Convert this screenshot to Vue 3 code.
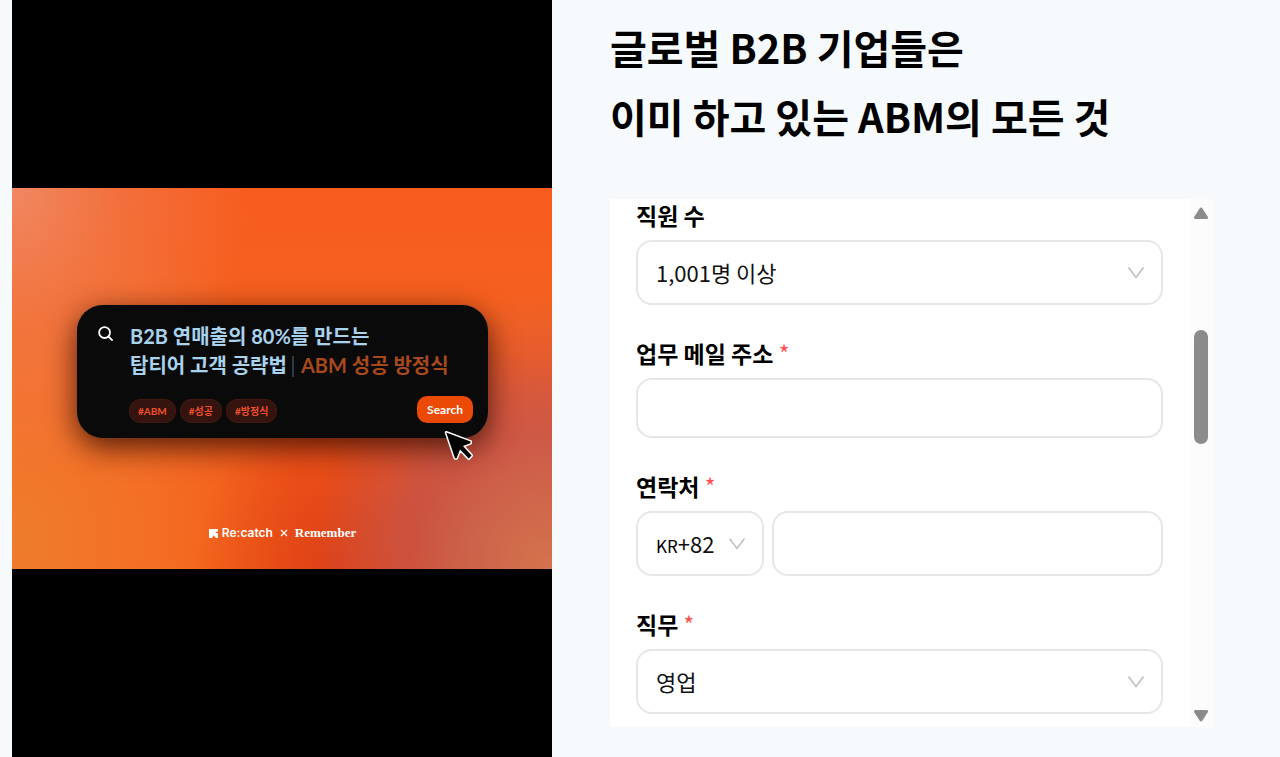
<script setup>
import { ref } from 'vue'

const tags = ['#ABM', '#성공', '#방정식']
const employees = ref('1,001명 이상')
const email = ref('')
const country = ref('+82')
const phone = ref('')
const job = ref('영업')
</script>

<template>
  <main class="page">
    <section class="media">
      <div class="banner">
        <div class="search-card">
          <div class="query">
            <svg class="lens" viewBox="0 0 16 16" aria-hidden="true">
              <circle cx="7" cy="7" r="5.8" />
              <path d="M11.2 11.2 15 15" />
            </svg>
            <p class="query-text">
              B2B 연매출의 80%를 만드는<br />
              탑티어 고객 공략법<span class="caret"></span><span class="accent">ABM 성공 방정식</span>
            </p>
          </div>
          <div class="card-foot">
            <ul class="tags">
              <li v-for="tag in tags" :key="tag">{{ tag }}</li>
            </ul>
            <button type="button" class="search-btn">Search</button>
          </div>
          <svg class="cursor" viewBox="0 0 30 32" aria-hidden="true">
            <path d="M2.2 2.4 26.6 11.6 26.4 13.2 19 16 27.6 25.6 24.8 28.6 16 19.4 12.6 28.2 11 28.2Z" />
          </svg>
        </div>
        <div class="brands">
          <svg class="mark" viewBox="0 0 9 9" aria-hidden="true">
            <path d="M0 0H9V2.2L6.2 3.4 9 4.4V9H7L4.4 6.2 3.2 9H0Z" />
          </svg>
          <span class="recatch">Re:catch</span>
          <svg class="times" viewBox="0 0 8 8" aria-hidden="true">
            <path d="M1 1 7 7M7 1 1 7" />
          </svg>
          <span class="remember">Remember</span>
        </div>
      </div>
    </section>

    <section class="content">
      <h1>글로벌 B2B 기업들은<br />이미 하고 있는 ABM의 모든 것</h1>

      <div class="panel">
        <form class="form" @submit.prevent>
          <div class="field">
            <label for="employees">직원 수</label>
            <div class="select">
              <select id="employees" v-model="employees">
                <option>1,001명 이상</option>
              </select>
              <svg class="chevron" viewBox="0 0 18 14" aria-hidden="true"><path d="M1.5 1.5 9 11.5 16.5 1.5" /></svg>
            </div>
          </div>

          <div class="field">
            <label for="email">업무 메일 주소 <span class="req">*</span></label>
            <input id="email" v-model="email" class="email" type="email" />
          </div>

          <div class="field">
            <label for="phone">연락처 <span class="req">*</span></label>
            <div class="phone-row">
              <div class="select country">
                <span class="code" aria-hidden="true">KR</span>
                <select v-model="country" aria-label="국가 번호">
                  <option>+82</option>
                </select>
                <svg class="chevron" viewBox="0 0 18 14" aria-hidden="true"><path d="M1.5 1.5 9 11.5 16.5 1.5" /></svg>
              </div>
              <input id="phone" v-model="phone" type="tel" />
            </div>
          </div>

          <div class="field">
            <label for="job">직무 <span class="req">*</span></label>
            <div class="select">
              <select id="job" v-model="job">
                <option>영업</option>
              </select>
              <svg class="chevron" viewBox="0 0 18 14" aria-hidden="true"><path d="M1.5 1.5 9 11.5 16.5 1.5" /></svg>
            </div>
          </div>
        </form>

        <div class="scrollbar" aria-hidden="true">
          <svg viewBox="0 0 14 12"><path d="M7 2 12.5 10.5H1.5Z" /></svg>
          <div class="track"><div class="thumb"></div></div>
          <svg viewBox="0 0 14 12"><path d="M7 10 12.5 1.5H1.5Z" /></svg>
        </div>
      </div>
    </section>
  </main>
</template>

<style>
body {
  margin: 0;
  background: #f6fafd;
}
</style>

<style scoped>
* {
  box-sizing: border-box;
}

.page {
  display: grid;
  grid-template-columns: 540fr 603fr;
  column-gap: 58px;
  min-height: 100vh;
  padding: 0 67px 0 12px;
  background: #f6fafd;
  font-family: "Noto Sans CJK KR", "Noto Sans", sans-serif;
  color: #000;
}

.media {
  display: flex;
  flex-direction: column;
  justify-content: center;
  background: #000;
}

.banner {
  display: flex;
  flex-direction: column;
  padding: 117px 64px 28px 65px;
  background:
    radial-gradient(ellipse 44% 76% at 0% 0%, rgba(240, 138, 102, 0.95), rgba(240, 122, 76, 0.65) 45%, rgba(243, 106, 50, 0) 100%),
    radial-gradient(ellipse 26% 36% at 100% 100%, rgba(212, 118, 78, 0.95), rgba(212, 112, 76, 0) 100%),
    radial-gradient(ellipse 28% 46% at 100% 72%, rgba(204, 90, 74, 0.95), rgba(214, 92, 66, 0) 100%),
    radial-gradient(ellipse 32% 50% at 88% 92%, rgba(196, 86, 72, 1), rgba(198, 82, 70, 0.8) 50%, rgba(212, 74, 50, 0) 100%),
    radial-gradient(ellipse 26% 44% at 60% 100%, rgba(218, 62, 26, 0.9), rgba(238, 70, 16, 0) 100%),
    radial-gradient(ellipse 54% 90% at 0% 92%, rgba(238, 124, 46, 1), rgba(244, 114, 40, 0.85) 50%, rgba(248, 90, 20, 0) 100%),
    linear-gradient(180deg, #f75c1e 0%, #f5611f 35%, #f2561c 60%, #f4560f 100%);
}

.search-card {
  position: relative;
  display: flex;
  flex-direction: column;
  gap: 16px;
  padding: 17px 15px 15px 21px;
  border-radius: 26px;
  background: #0a0a0b;
  box-shadow: 0 0 1px rgba(90, 92, 100, 0.7), 0 9px 30px rgba(40, 8, 0, 0.8);
}

.query {
  display: flex;
  gap: 17px;
}

.lens {
  flex: none;
  width: 15px;
  height: 15px;
  margin-top: 4px;
  fill: none;
  stroke: #fff;
  stroke-width: 1.9;
  stroke-linecap: round;
}

.query-text {
  margin: 0;
  font: 700 20px/29px Lato, "Noto Sans CJK KR", sans-serif;
  color: #a9d3ec;
  white-space: nowrap;
}

.caret {
  display: inline-block;
  width: 2px;
  height: 21px;
  margin: 0 7px 0 5px;
  background: #2b3b47;
  vertical-align: -4px;
}

.accent {
  color: #a8491c;
}

.card-foot {
  display: flex;
  align-items: flex-end;
  justify-content: space-between;
  padding-left: 31px;
}

.tags {
  display: flex;
  gap: 4px;
  margin: 0;
  padding: 0;
  list-style: none;
}

.tags li {
  padding: 0 8px;
  border: 1px solid #42190f;
  border-radius: 11px;
  background: #351410;
  font: 700 10px/22px Lato, "Noto Sans CJK KR", sans-serif;
  color: #f0512b;
}

.search-btn {
  height: 27px;
  padding: 0 10px;
  border: 0;
  border-radius: 10px;
  background: #ea4a06;
  font: 700 12px/27px Lato, sans-serif;
  color: #fff;
}

.cursor {
  position: absolute;
  right: 14px;
  bottom: -24px;
  width: 30px;
  height: 32px;
}

.cursor path {
  fill: #000;
  stroke: #fff;
  stroke-width: 3;
  stroke-linejoin: round;
  paint-order: stroke;
}

.brands {
  display: flex;
  align-items: center;
  justify-content: center;
  height: 16px;
  margin-top: 87px;
  color: #fff;
}

.mark {
  width: 9px;
  height: 9px;
  margin-right: 4px;
  fill: #fff;
}

.recatch {
  font: 600 12px/16px Inter, sans-serif;
}

.times {
  width: 8px;
  height: 8px;
  margin: 0 7px;
  fill: none;
  stroke: #fff;
  stroke-width: 1.2;
}

.remember {
  font: 700 13px/16px "Liberation Serif", serif;
}

.content {
  padding-top: 13px;
}

h1 {
  margin: 0;
  font-size: 40px;
  font-weight: 700;
  line-height: 69px;
  white-space: nowrap;
}

.panel {
  display: flex;
  margin-top: 48px;
  background: #fff;
}

.form {
  flex: 1;
  display: flex;
  flex-direction: column;
  gap: 32px;
  min-width: 0;
  padding: 0 26px 13px;
}

.field {
  display: flex;
  flex-direction: column;
  gap: 9px;
}

label {
  font-size: 23px;
  font-weight: 700;
  line-height: 32px;
}

.req {
  font-weight: 400;
  color: #ff4d4f;
}

input,
.select {
  height: 65px;
  border: 2px solid #e6e6e6;
  border-radius: 16px;
  background: #fff;
}

input {
  width: 100%;
  min-width: 0;
  padding: 0 18px;
  font: 400 22px/33px "Noto Sans CJK KR", sans-serif;
  outline: none;
}

.email {
  height: 60px;
}

.select {
  display: flex;
  align-items: center;
  padding: 0 16px 0 18px;
}

select {
  flex: 1;
  min-width: 0;
  padding: 0;
  border: 0;
  appearance: none;
  background: transparent;
  font: 400 22px/33px "Noto Sans CJK KR", sans-serif;
  color: #111;
  outline: none;
}

.chevron {
  flex: none;
  width: 18px;
  height: 14px;
  fill: none;
  stroke: #bfbfbf;
  stroke-width: 1.6;
}

.phone-row {
  display: flex;
  gap: 8px;
}

.country {
  flex: none;
  width: 128px;
}

.code {
  padding-top: 4px;
  font-size: 17px;
  line-height: 24px;
}

.scrollbar {
  display: flex;
  flex-direction: column;
  align-items: center;
  width: 24px;
  padding: 8px 0 5px;
  background: #fcfcfc;
}

.scrollbar svg {
  flex: none;
  width: 14px;
  height: 12px;
  fill: #8b8b8b;
  stroke: #8b8b8b;
  stroke-width: 3;
  stroke-linejoin: round;
}

.track {
  flex: 1;
  width: 14px;
  padding-top: 111px;
}

.thumb {
  height: 114px;
  border-radius: 7px;
  background: #8b8b8b;
}
</style>
